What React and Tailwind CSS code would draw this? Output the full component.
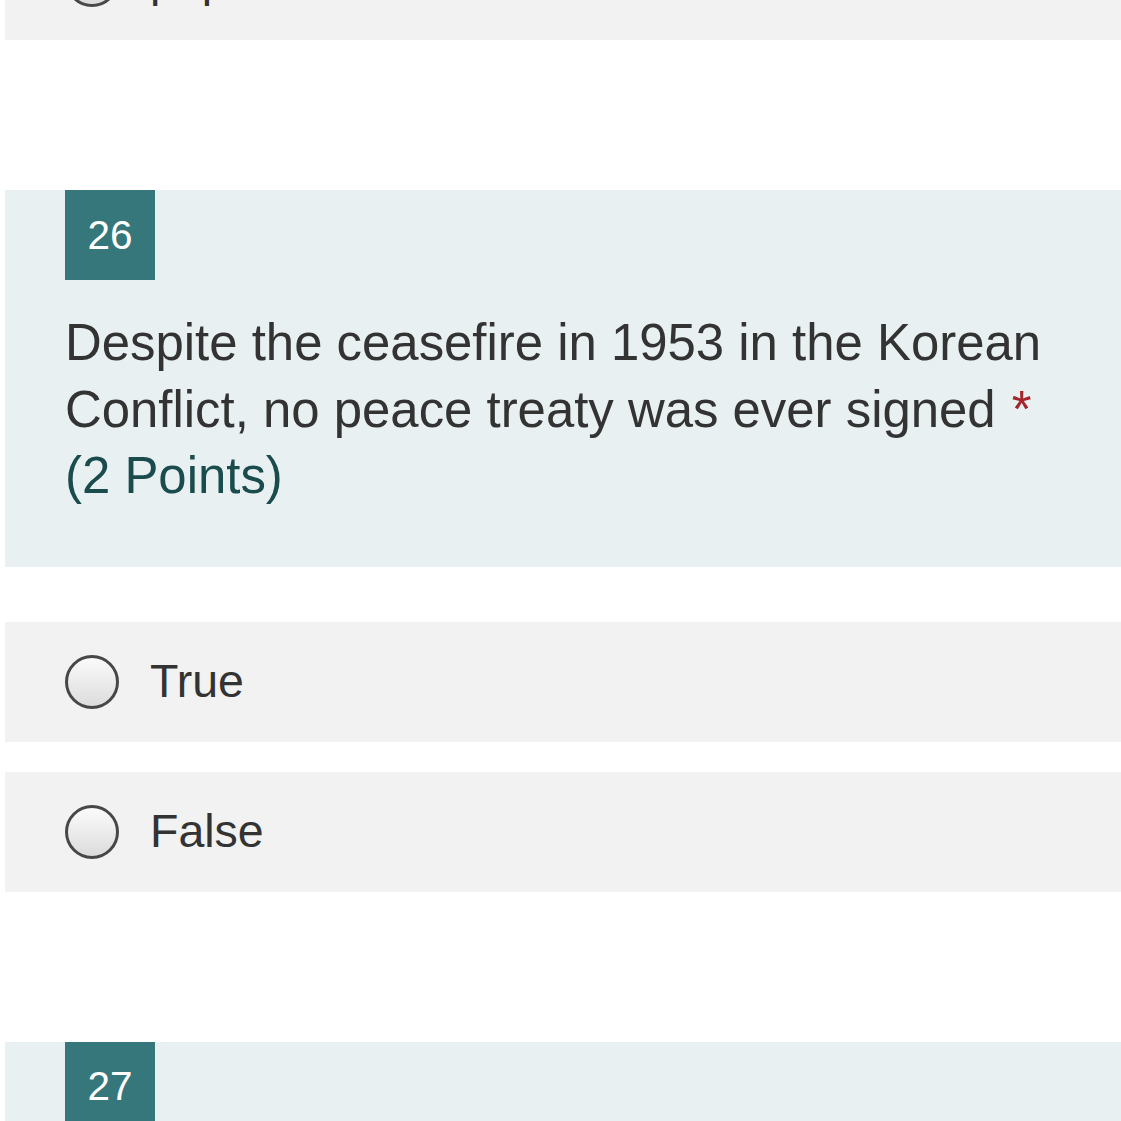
import React from "react";

const Radio = () => (
  <span className="box-border block h-[54px] w-[54px] shrink-0 rounded-full border-[3px] border-[#474747] bg-gradient-to-b from-[#fbfbfb] to-[#dcdcdc]" />
);

const Option = ({ label, className = "" }) => (
  <label className={`flex h-[120px] items-center bg-[#f2f2f2] pl-[60px] ${className}`}>
    <Radio />
    <span className="ml-[31px] text-[46.5px] leading-none text-[#333333]">{label}</span>
  </label>
);

const Badge = ({ n }) => (
  <div className="flex h-[90px] w-[90px] items-center justify-center bg-[#35777a] text-[40.5px] text-white">
    {n}
  </div>
);

const App = () => {
  return (
    <div className="h-[1121px] overflow-hidden bg-white pl-[5px] font-['Liberation_Sans',Arial,sans-serif]">
      <Option label="paper" className="-mt-[80px]" />

      <section className="mt-[150px] bg-[#e9f0f2] pl-[60px] pb-[57px]">
        <Badge n="26" />
        <div className="mt-[30px] text-[50.9px] leading-[66.5px] text-[#333333]">
          <div>
            Despite the ceasefire in 1953 in the Korean Conflict, no peace
            treaty was ever signed{" "}
            <span className="ml-[2px] text-[#a4262c]">*</span>
          </div>
          <div className="text-[#1a4b4d]">(2 Points)</div>
        </div>
      </section>

      <div className="mt-[55px] flex flex-col gap-[30px]">
        <Option label="True" />
        <Option label="False" />
      </div>

      <section className="mt-[150px] h-[200px] bg-[#e9f0f2] pl-[60px]">
        <Badge n="27" />
      </section>
    </div>
  );
};

export default App;
